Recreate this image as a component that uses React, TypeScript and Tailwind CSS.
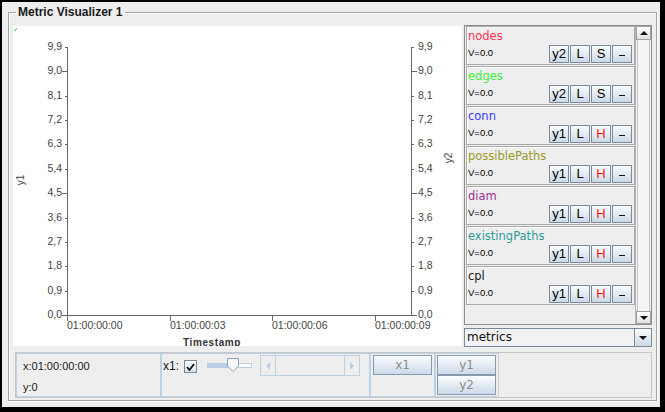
import React from "react";

const metrics = [
  { name: "nodes", color: "text-[#ff3050]", axis: "y2", mode: "S" },
  { name: "edges", color: "text-[#3cf23c]", axis: "y2", mode: "S" },
  { name: "conn", color: "text-[#3838ff]", axis: "y1", mode: "H" },
  { name: "possiblePaths", color: "text-[#9c9a2c]", axis: "y1", mode: "H" },
  { name: "diam", color: "text-[#9a3399]", axis: "y1", mode: "H" },
  { name: "existingPaths", color: "text-[#2f9a9a]", axis: "y1", mode: "H" },
  { name: "cpl", color: "text-[#1a1a1a]", axis: "y1", mode: "H" },
];

const yLabels = ["0,0", "0,9", "1,8", "2,7", "3,6", "4,5", "5,4", "6,3", "7,2", "8,1", "9,0", "9,9"];
const xLabels = ["01:00:00:00", "01:00:00:03", "01:00:00:06", "01:00:00:09"];

// axis geometry inside the white plot (449x320)
const AX_L = 54;
const AX_R = 398;
const AX_T = 21;
const AX_B = 289;
const Y_STEP = (AX_B - AX_T) / 11;
const X_STEP = 102.7;

function Chart() {
  return (
    <svg width="449" height="320" className="block bg-white" style={{ fontFamily: "'Liberation Sans', Arial, sans-serif" }}>
      {/* little green marker top-left */}
      <path d="M1.5 4.5 L2.5 4.5 L3.5 2" stroke="#22cc22" strokeWidth="1" fill="none" />

      {/* y axes */}
      <line x1={AX_L + 0.5} y1={AX_T} x2={AX_L + 0.5} y2={AX_B + 1} stroke="#666" />
      <line x1={AX_R + 0.5} y1={AX_T} x2={AX_R + 0.5} y2={AX_B + 1} stroke="#666" />
      {/* x axis */}
      <line x1={AX_L} y1={AX_B + 0.5} x2={AX_R + 1} y2={AX_B + 0.5} stroke="#666" />

      {yLabels.map((l, i) => {
        const y = Math.round(AX_B - i * Y_STEP) + 0.5;
        const major = i % 5 === 0;
        const len = major ? 5 : 2;
        return (
          <g key={l}>
            <line x1={AX_L - len} y1={y} x2={AX_L} y2={y} stroke="#666" />
            <line x1={AX_R + 1} y1={y} x2={AX_R + 1 + len} y2={y} stroke="#666" />
            <text x={AX_L - 5} y={y + 2} fontSize="10.5" fill="#444" textAnchor="end">
              {l}
            </text>
            <text x={AX_R + 7} y={y + 2} fontSize="10.5" fill="#444">
              {l}
            </text>
          </g>
        );
      })}

      {xLabels.map((l, i) => {
        const x = Math.round(AX_L + i * X_STEP) + 0.5;
        return (
          <g key={l}>
            <line x1={x} y1={AX_B} x2={x} y2={AX_B + 6} stroke="#666" />
            <text x={x - 0.5} y={303} fontSize="10.5" fill="#444">
              {l}
            </text>
          </g>
        );
      })}

      <text x="199" y="320" fontSize="10" fontWeight="bold" fill="#333" textAnchor="middle" letterSpacing="0.6">
        Timestamp
      </text>
      <text x="0" y="4" fontSize="10" fill="#444" textAnchor="middle" transform="translate(7 154) rotate(-90)">
        y1
      </text>
      <text x="0" y="4" fontSize="10" fill="#444" textAnchor="middle" transform="translate(435 132) rotate(-90)">
        y2
      </text>
    </svg>
  );
}

function SmallButton({ children, className = "" }: { children: React.ReactNode; className?: string }) {
  return (
    <div
      className={`flex h-[18px] w-[20px] items-center justify-center border border-[#7a8a99] bg-gradient-to-b from-[#fbfcfd] to-[#cbd9e8] text-[13px] leading-none ${className}`}
    >
      {children}
    </div>
  );
}

function LegendItem({ m }: { m: (typeof metrics)[number] }) {
  return (
    <div className="mb-[1px] h-[39px] border border-[#a9a9a9] shadow-[inset_1px_1px_0_#ffffff] pl-[1px] pr-[2px] pt-[1px]">
      <div className={`h-[16px] text-[11.5px] leading-[16px] ${m.color} font-['DejaVu_Sans',sans-serif]`}>{m.name}</div>
      <div className="flex h-[19px] items-center justify-between">
        <span className="text-[9.5px] text-black font-['Liberation_Sans',Arial,sans-serif]">V=0.0</span>
        <div className="flex gap-[1px] text-black font-['Liberation_Sans',Arial,sans-serif]">
          <SmallButton>{m.axis}</SmallButton>
          <SmallButton>L</SmallButton>
          <SmallButton className={m.mode === "H" ? "text-[#ff1a1a]" : ""}>{m.mode}</SmallButton>
          <SmallButton>
            <span className="block h-[1.5px] w-[6px] translate-y-[2px] bg-[#111]" />
          </SmallButton>
        </div>
      </div>
    </div>
  );
}

function Arrow({ dir, color = "#111" }: { dir: "up" | "down" | "left" | "right"; color?: string }) {
  const pts = {
    up: "0,4 4,0 8,4",
    down: "0,0 8,0 4,4",
    left: "4,0 4,8 0,4",
    right: "0,0 4,4 0,8",
  }[dir];
  const w = dir === "up" || dir === "down" ? 8 : 4;
  const h = dir === "up" || dir === "down" ? 4 : 8;
  return (
    <svg width={w} height={h} className="block">
      <polygon points={pts} fill={color} />
    </svg>
  );
}

function Legend() {
  return (
    <div className="flex h-[300px] border border-[#8e8e8e] bg-[#eeeeee]">
      <div className="flex-1 pl-[1px] pt-[0px]">
        {metrics.map((m) => (
          <LegendItem key={m.name} m={m} />
        ))}
      </div>
      {/* vertical scrollbar */}
      <div className="flex w-[16px] flex-col border-l border-[#b5b5b5] bg-[#eeeeee]">
        <div className="flex h-[14px] items-center justify-center border border-[#a0a0a0] bg-gradient-to-b from-[#ffffff] to-[#e2e2e2]">
          <Arrow dir="up" />
        </div>
        <div className="mx-[1px] flex-1 border-x border-[#c8c8c8] bg-[#f4f4f4]" />
        <div className="flex h-[13px] items-center justify-center border border-[#a0a0a0] bg-gradient-to-b from-[#ffffff] to-[#e2e2e2]">
          <Arrow dir="down" />
        </div>
      </div>
    </div>
  );
}

function Combo() {
  return (
    <div className="mt-[3px] flex h-[19px] border border-[#7a8a99] bg-[#f2f2f2]">
      <div className="flex-1 pl-[2px] text-[12px] leading-[17px] text-[#111] font-['DejaVu_Sans',sans-serif]">metrics</div>
      <div className="flex w-[17px] items-center justify-center border-l border-[#7a8a99] bg-gradient-to-b from-[#fbfcfd] to-[#cbd9e8]">
        <Arrow dir="down" />
      </div>
    </div>
  );
}

function WideButton({ label }: { label: string }) {
  return (
    <div className="flex h-[20px] w-[59px] items-center justify-center border border-[#8799ad] bg-gradient-to-b from-[#fbfcfd] to-[#cddaea] text-[12px] text-[#8c8c8c] font-['DejaVu_Sans',sans-serif]">
      {label}
    </div>
  );
}

function BottomPanel() {
  return (
    <div className="ml-[2px] mt-[6px] flex h-[46px] border border-[#c6c6c6] text-[#1a1a1a] font-['Liberation_Sans',Arial,sans-serif]">
      <div className="flex w-[145px] flex-col border border-[#bcd0e6] pl-[6px] pt-[5px] text-[11px]">
        <div className="h-[21px] leading-[14px]">x:01:00:00:00</div>
        <div className="leading-[14px]">y:0</div>
      </div>
      <div className="flex w-[209px] items-start border border-[#bcd0e6] pt-[5px]">
        <span className="ml-[1px] text-[12px] leading-[14px]">x1:</span>
        <div className="ml-[5px] mt-[1px] flex h-[13px] w-[13px] items-center justify-center border border-[#7a8a99] bg-gradient-to-b from-[#ffffff] to-[#d4dfeb]">
          <svg width="9" height="8">
            <path d="M1 4 L3.5 7 L8 1" stroke="#111" strokeWidth="1.8" fill="none" />
          </svg>
        </div>
        {/* slider */}
        <svg width="46" height="16" className="ml-[10px] mt-[-2px] block">
          <rect x="0.5" y="6.5" width="44" height="4" fill="#ffffff" stroke="#b9cde4" />
          <rect x="0" y="6" width="22" height="5" fill="#b9cde4" />
          <path d="M20.5 1.5 H31.5 V9 L26 14.5 L20.5 9 Z" fill="#f5f7fa" stroke="#8fa3b8" />
        </svg>
        {/* horizontal scrollbar */}
        <div className="ml-[7px] mt-[-4px] flex h-[21px] w-[100px] border border-[#bcd0e6]">
          <div className="flex w-[15px] items-center justify-center border-r border-[#bcd0e6]">
            <Arrow dir="left" color="#b9cde4" />
          </div>
          <div className="flex-1" />
          <div className="flex w-[15px] items-center justify-center border-l border-[#bcd0e6]">
            <Arrow dir="right" color="#b9cde4" />
          </div>
        </div>
      </div>
      <div className="flex w-[65px] flex-col border border-[#bcd0e6] pl-[2px] pt-[1px]">
        <WideButton label="x1" />
      </div>
      <div className="flex w-[64px] flex-col border border-[#bcd0e6] pl-[1px] pt-[1px]">
        <WideButton label="y1" />
        <WideButton label="y2" />
      </div>
      <div className="flex-1" />
    </div>
  );
}

export default function App() {
  return (
    <div className="h-[412px] w-[665px] bg-black pb-[5px] pl-[2px] pr-[5px] pt-[2px]">
      <div className="h-full w-full bg-[#eeeeee] pb-[6px] pl-[6px] pr-[3px] pt-[10px]">
        <div className="relative h-full border border-[#a3a3a3] pb-[3px] pl-[4px] pr-[4px] pt-[13px] shadow-[inset_1px_1px_0_#ffffff,1px_1px_0_#ffffff]">
          {/* titled border caption */}
          <span className="absolute left-[7px] top-[-8px] bg-[#eeeeee] px-[2px] text-[12px] font-bold leading-[14px] text-[#1a1a1a] font-['Liberation_Sans',Arial,sans-serif]">
            Metric Visualizer 1
          </span>
          <div className="flex h-[320px]">
            <Chart />
            <div className="ml-[2px] mt-[-1px] flex-1">
              <Legend />
              <Combo />
            </div>
          </div>
          <BottomPanel />
        </div>
      </div>
    </div>
  );
}
